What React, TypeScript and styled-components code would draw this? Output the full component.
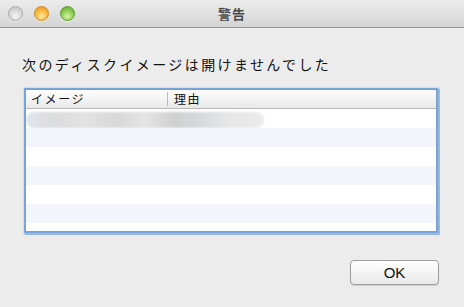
import React from "react";
import styled, { createGlobalStyle } from "styled-components";

const Global = createGlobalStyle`
  html, body { margin: 0; padding: 0; background: #ececec; }
  body { font-family: "Noto Sans CJK JP", "Liberation Sans", sans-serif; }
`;

const Window = styled.div`
  width: 464px;
  height: 307px;
  display: flex;
  flex-direction: column;
  background: #ececec;
  overflow: hidden;
`;

const TitleBar = styled.div`
  height: 27px;
  display: grid;
  grid-template-columns: 1fr auto 1fr;
  align-items: center;
  background: linear-gradient(#ececec, #d4d4d4);
  border-bottom: 1px solid #969696;
  box-sizing: content-box;
`;

const Lights = styled.div`
  display: flex;
  gap: 11px;
  padding-left: 8px;
  align-items: center;
`;

const Light = styled.div<{ $c: "gray" | "orange" | "green" }>`
  width: 15px;
  height: 15px;
  border-radius: 50%;
  box-sizing: border-box;
  border: 1px solid
    ${(p) => (p.$c === "gray" ? "#a9a9a9" : p.$c === "orange" ? "#c98b22" : "#5b9a36")};
  background: ${(p) =>
    p.$c === "gray"
      ? "radial-gradient(circle at 50% 70%, #f6f6f6 0%, #dadada 45%, #c4c4c4 100%)"
      : p.$c === "orange"
      ? "radial-gradient(circle at 50% 72%, #ffe9a6 0%, #f7b940 50%, #e39a22 100%)"
      : "radial-gradient(circle at 50% 72%, #d9f3a6 0%, #8fcd55 50%, #5ea532 100%)"};
  box-shadow: 0 1px 0 rgba(255, 255, 255, 0.6);
`;

const Title = styled.div`
  font-family: "Noto Sans CJK JP", sans-serif;
  font-size: 13px;
  font-weight: 600;
  color: #4a4a4a;
  letter-spacing: 1px;
  line-height: 27px;
`;

const Content = styled.div`
  display: flex;
  flex-direction: column;
  padding: 26px 26px 0 22px;
`;

const Message = styled.div`
  font-family: "Noto Sans CJK JP", sans-serif;
  font-size: 14px;
  line-height: 20px;
  letter-spacing: 2.4px;
  color: #111;
  white-space: nowrap;
`;

const Table = styled.div`
  margin: 15px 1px 0 3px;
  height: 143px;
  box-sizing: border-box;
  background: #fff;
  border: 1px solid #7d9fc9;
  box-shadow: 0 0 0 1px #78a5dc, 0 0 1px 2.5px rgba(122, 167, 222, 0.75);
  overflow: hidden;
  display: flex;
  flex-direction: column;
`;

const Header = styled.div`
  height: 18px;
  flex: none;
  display: grid;
  grid-template-columns: 141px 1fr;
  align-items: center;
  background: linear-gradient(#ffffff, #f3f3f3 50%, #e9e9e9);
  border-bottom: 1px solid #b8b8b8;
`;

const HeaderCell = styled.div<{ $sep?: boolean }>`
  font-family: "Noto Sans CJK JP", sans-serif;
  font-size: 12px;
  line-height: 14px;
  color: #111;
  letter-spacing: 1.6px;
  padding-left: ${(p) => (p.$sep ? "6px" : "5px")};
  border-left: ${(p) => (p.$sep ? "1px solid #bcbcbc" : "none")};
  white-space: nowrap;
`;

const Row = styled.div<{ $alt: boolean }>`
  height: 19px;
  flex: none;
  position: relative;
  background: ${(p) => (p.$alt ? "#f2f6fb" : "#ffffff")};
`;

const Blur = styled.div`
  position: absolute;
  left: 0;
  top: 3px;
  width: 238px;
  height: 16px;
  border-radius: 9px;
  background: linear-gradient(
    90deg,
    #dfe5ec 0%,
    #dcdcdc 12%,
    #e2e2e2 25%,
    #d8d8d8 38%,
    #e4e4e4 50%,
    #d0d0d0 62%,
    #d5d9dc 72%,
    #e6e6e6 85%,
    #ececec 100%
  );
  filter: blur(1.2px);
`;

const Footer = styled.div`
  display: flex;
  justify-content: flex-end;
  margin-top: 28px;
`;

const Button = styled.button`
  width: 89px;
  height: 25px;
  box-sizing: border-box;
  border: 1px solid #9c9c9c;
  border-radius: 4px;
  background: linear-gradient(#ffffff, #f4f4f4 50%, #e9e9e9);
  box-shadow: 0 1px 1px rgba(0, 0, 0, 0.12);
  font-family: "Liberation Sans", "DejaVu Sans", sans-serif;
  font-size: 15px;
  color: #111;
  padding: 0;
  margin-right: -1px;
`;

export default function App() {
  const rows = [0, 1, 2, 3, 4, 5, 6];
  return (
    <Window>
      <Global />
      <TitleBar>
        <Lights>
          <Light $c="gray" />
          <Light $c="orange" />
          <Light $c="green" />
        </Lights>
        <Title>警告</Title>
        <div />
      </TitleBar>
      <Content>
        <Message>次のディスクイメージは開けませんでした</Message>
        <Table>
          <Header>
            <HeaderCell>イメージ</HeaderCell>
            <HeaderCell $sep>理由</HeaderCell>
          </Header>
          {rows.map((i) => (
            <Row key={i} $alt={i % 2 === 1}>
              {i === 0 && <Blur />}
            </Row>
          ))}
        </Table>
        <Footer>
          <Button>OK</Button>
        </Footer>
      </Content>
    </Window>
  );
}
